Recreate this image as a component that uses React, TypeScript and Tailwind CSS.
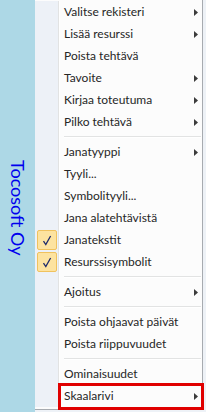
import React from 'react';

type Item =
  | { kind: 'item'; label: string; sub?: boolean; checked?: boolean; marked?: boolean }
  | { kind: 'sep' };

const items: Item[] = [
  { kind: 'item', label: 'Valitse rekisteri', sub: true },
  { kind: 'item', label: 'Lisää resurssi', sub: true },
  { kind: 'item', label: 'Poista tehtävä' },
  { kind: 'item', label: 'Tavoite', sub: true },
  { kind: 'item', label: 'Kirjaa toteutuma', sub: true },
  { kind: 'item', label: 'Pilko tehtävä', sub: true },
  { kind: 'sep' },
  { kind: 'item', label: 'Janatyyppi', sub: true },
  { kind: 'item', label: 'Tyyli...' },
  { kind: 'item', label: 'Symbolityyli...' },
  { kind: 'item', label: 'Jana alatehtävistä' },
  { kind: 'item', label: 'Janatekstit', checked: true },
  { kind: 'item', label: 'Resurssisymbolit', checked: true },
  { kind: 'sep' },
  { kind: 'item', label: 'Ajoitus', sub: true },
  { kind: 'sep' },
  { kind: 'item', label: 'Poista ohjaavat päivät' },
  { kind: 'item', label: 'Poista riippuvuudet' },
  { kind: 'sep' },
  { kind: 'item', label: 'Ominaisuudet' },
  { kind: 'item', label: 'Skaalarivi', sub: true, marked: true },
];

function Arrow() {
  return (
    <svg width="4" height="7" viewBox="0 0 4 7" className="shrink-0">
      <path d="M0 0 L4 3.5 L0 7 Z" fill="#3c3c3c" />
    </svg>
  );
}

function CheckBox() {
  return (
    <div className="w-[20px] h-[20px] rounded-[2px] border border-[#f0c25e] bg-[#fde3a0] flex items-center justify-center">
      <svg width="10" height="11" viewBox="0 0 10 11">
        <path d="M1.5 6.2 L3.8 9.6 L8.6 1" stroke="#1d2a6b" strokeWidth="1.3" fill="none" />
      </svg>
    </div>
  );
}

function IconCell({ children }: { children?: React.ReactNode }) {
  return (
    <div className="flex h-full shrink-0">
      <div className="w-[23px] h-full bg-[#edf1f7] flex items-center justify-center">{children}</div>
      <div className="w-px h-full bg-[#e2e3e3]" />
      <div className="w-px h-full bg-white" />
    </div>
  );
}

export default function App() {
  return (
    <div
      className="flex w-[206px] h-[412px] bg-[#eef2f7] overflow-hidden"
      style={{ fontFamily: 'Lato, "Noto Sans", sans-serif' }}
    >
      <div className="w-[35px] shrink-0 bg-[#add8e6] flex items-center justify-center">
        <span className="[writing-mode:vertical-rl] text-[18px] leading-none text-[#0000ee] pt-[3px]">
          Tocosoft Oy
        </span>
      </div>
      <div className="w-[168px] h-[410px] bg-[#fcfcfc] border-r border-b border-[#a7abb0] pt-px flex flex-col">
        {items.map((it, i) =>
          it.kind === 'sep' ? (
            <div key={i} className="flex h-[8px] items-stretch">
              <IconCell />
              <div className="flex-1 flex flex-col justify-center pl-[4px] pr-[1px]">
                <div className="h-px bg-[#e2e3e3]" />
                <div className="h-px bg-white" />
              </div>
            </div>
          ) : (
            <div key={i} className="relative flex h-[22px] items-center">
              <IconCell>{it.checked && <CheckBox />}</IconCell>
              <div className="flex-1 flex items-center justify-between pl-[4px] pr-[4px] text-[12px] text-[#262626] whitespace-nowrap">
                <span>{it.label}</span>
                {it.sub && <Arrow />}
              </div>
              {it.marked && (
                <div className="absolute left-[23px] right-[-2px] top-[-2px] bottom-[-3px] border-[3px] border-[#e00000]" />
              )}
            </div>
          )
        )}
      </div>
    </div>
  );
}
